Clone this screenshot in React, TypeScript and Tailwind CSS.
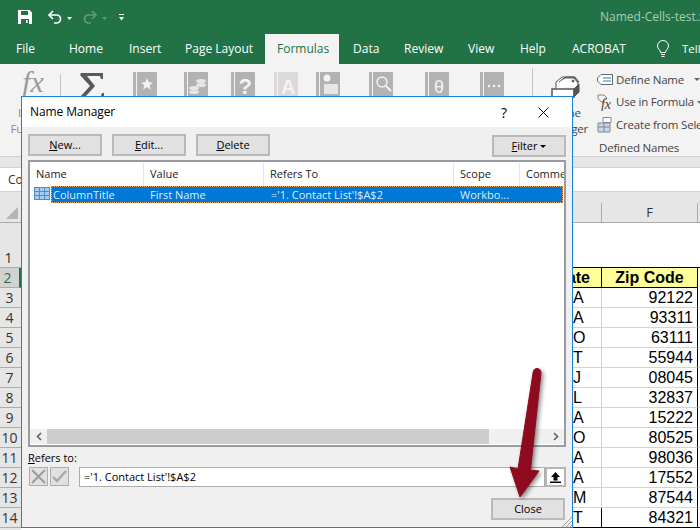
import React from 'react';

const tabs = [
  { label: 'File', w: 'w-[69px]', pl: 'pl-[16px]' },
  { label: 'Home', w: 'w-[60px]', pl: '' },
  { label: 'Insert', w: 'w-[56px]', pl: '' },
  { label: 'Page Layout', w: 'w-[80px]', pl: '' },
];

const tabsAfter = [
  { label: 'Data', w: 'w-[65px]', pl: 'pl-[14px]' },
  { label: 'Review', w: 'w-[64px]', pl: '' },
  { label: 'View', w: 'w-[52px]', pl: '' },
  { label: 'Help', w: 'w-[52px]', pl: '' },
  { label: 'ACROBAT', w: 'w-[82px]', pl: '' },
];

const states = ['CA', 'CA', 'MO', 'MT', 'NJ', 'FL', 'PA', 'CO', 'CA', 'PA', 'NM', 'UT'];
const zips = ['92122', '93311', '63111', '55944', '08045', '32837', '15222', '80525', '98036', '17552', '87544', '84321'];

const Book: React.FC<{ className: string; light?: boolean; children?: React.ReactNode }> = ({ className, light, children }) => (
  <svg width="24" height="40" viewBox="0 0 24 40" className={`flex-shrink-0 ${className}`}>
    <rect x="0" y="0" width="3" height="40" fill={light ? '#dcd8dc' : '#b2b2b2'} />
    <rect x="4" y="0" width="20" height="40" fill={light ? '#dcd8dc' : '#b2b2b2'} />
    {children}
  </svg>
);

const DialogButton: React.FC<{ className?: string; children: React.ReactNode }> = ({ className = '', children }) => (
  <button className={`w-[74px] h-[22px] flex items-center justify-center bg-[#e1e1e1] border-2 border-[#b9b9b9] text-[11px] text-black ${className}`}>
    {children}
  </button>
);

export default function App() {
  return (
    <div className="relative w-[700px] h-[530px] overflow-hidden bg-white flex flex-col font-['Open_Sans',sans-serif]">
      {/* title bar */}
      <div className="h-[34px] bg-[#217346] flex items-center flex-shrink-0">
        <svg width="16" height="16" viewBox="0 0 16 16" className="ml-[17px]">
          <path d="M1 1h11.5L15 3.5V15H1z M4 2v4h7V2z M4 10v5h8v-5z" fill="#fff" fillRule="evenodd" />
          <rect x="9" y="11" width="1.6" height="3" fill="#fff" />
        </svg>
        <svg width="16" height="14" viewBox="0 0 16 14" className="ml-[14px]" fill="none" stroke="#fff" strokeWidth="1.7">
          <path d="M6 1 2 5l4 4" />
          <path d="M2 5h7.5a4 4 0 0 1 0 8H7" />
        </svg>
        <svg width="5" height="3" viewBox="0 0 5 3" className="ml-[4px] mt-[2px]"><path d="M0 0h5L2.5 3z" fill="#fff" /></svg>
        <svg width="16" height="14" viewBox="0 0 16 14" className="ml-[10px]" fill="none" stroke="#5f9a7b" strokeWidth="1.7">
          <path d="m10 1 4 4-4 4" />
          <path d="M14 5H6.5a4 4 0 0 0 0 8H9" />
        </svg>
        <svg width="5" height="3" viewBox="0 0 5 3" className="ml-[4px] mt-[2px]"><path d="M0 0h5L2.5 3z" fill="#5f9a7b" /></svg>
        <svg width="5" height="7" viewBox="0 0 5 7" className="ml-[12px]"><path d="M0 0h5v1H0zM0 3h5L2.5 6.5z" fill="#fff" /></svg>
        <span className="ml-auto w-[100px] text-[12px] whitespace-nowrap overflow-hidden text-[#a9cbb8]">Named-Cells-test.xlsx</span>
      </div>

      {/* tabs */}
      <div className="h-[30px] bg-[#217346] flex flex-shrink-0 text-[12px] text-white overflow-hidden">
        {tabs.map((t) => (
          <div key={t.label} className={`${t.w} ${t.pl} flex items-center flex-shrink-0`}>{t.label}</div>
        ))}
        <div className="w-[74px] bg-[#f3f3f3] text-[#217346] flex items-center pl-[12px] flex-shrink-0">Formulas</div>
        {tabsAfter.map((t) => (
          <div key={t.label} className={`${t.w} ${t.pl} flex items-center flex-shrink-0`}>{t.label}</div>
        ))}
        <svg width="14" height="18" viewBox="0 0 14 18" fill="none" stroke="#fff" strokeWidth="1" className="ml-[2px] mt-[6px] flex-shrink-0">
          <path d="M4.5 12.5C4.5 10 1.5 9 1.5 6a5.5 5.5 0 0 1 11 0c0 3-3 4-3 6.5z" />
          <path d="M5 14.5h4M5.5 16.5h3" />
        </svg>
        <div className="ml-[12px] flex items-center flex-shrink-0 text-[11.5px]">Tell me</div>
      </div>

      {/* ribbon */}
      <div className="h-[93px] bg-[#f3f3f3] flex flex-shrink-0 border-b border-[#d0d0d0] text-[11.5px] tracking-[-0.2px] text-[#444]">
        <div className="w-[60px] flex-shrink-0 flex flex-col items-center text-[#8a8a8a]">
          <span className="mt-[3px] ml-[6px] h-[30px] font-['Liberation_Serif',serif] italic text-[30px] leading-[30px] text-[#9a9a9a]">fx</span>
          <span className="mt-[8px] ml-[6px] leading-[16px]">Insert</span>
          <span className="ml-[6px] leading-[16px]">Function</span>
        </div>
        <div className="w-px h-[22px] mt-[10px] bg-[#c6c6c6] flex-shrink-0" />
        <svg width="24" height="26" viewBox="0 0 24 26" className="ml-[19px] mt-[9px] flex-shrink-0">
          <path d="M1 0h22v6h-2l-1-3H7l8 10-9 10h15l1-3h2v6H0v-2l10-11L0 2z" fill="#595959" />
        </svg>
        <Book className="ml-[29px] mt-[8px]">
          <path d="m14 6 1.8 4.3 4.2.3-3.300 2.800 1.100 4.300L14 15l-3.800 2.500 1.100-4.300L8 10.600l4.200-.3z" fill="#f3f3f3" />
        </Book>
        <Book className="ml-[27px] mt-[8px]">
          <ellipse cx="17" cy="9" rx="5" ry="2" fill="#e6e6e6" />
          <ellipse cx="17" cy="13" rx="5" ry="2" fill="#e6e6e6" />
          <ellipse cx="10" cy="16" rx="5" ry="2" fill="#e6e6e6" />
          <ellipse cx="10" cy="20" rx="5" ry="2" fill="#e6e6e6" />
        </Book>
        <Book className="ml-[23px] mt-[8px]">
          <text x="14" y="22" textAnchor="middle" fontSize="22" fontWeight="700" fill="#f3f3f3" fontFamily="'Liberation Sans', sans-serif">?</text>
        </Book>
        <Book className="ml-[19px] mt-[8px]" light>
          <text x="14" y="22" textAnchor="middle" fontSize="20" fontWeight="700" fill="#f3f3f3" fontFamily="'Liberation Sans', sans-serif">A</text>
        </Book>
        <Book className="ml-[18px] mt-[8px]">
          <circle cx="11" cy="6" r="3.5" fill="#f3f3f3" />
          <path d="M8 12h14v10H8z" fill="#e6e6e6" />
        </Book>
        <Book className="ml-[29px] mt-[8px]">
          <circle cx="13" cy="10" r="5" fill="none" stroke="#f3f3f3" strokeWidth="1.5" />
          <path d="m17 14 5 5" stroke="#f3f3f3" strokeWidth="2" />
        </Book>
        <Book className="ml-[32px] mt-[8px]">
          <text x="14" y="21" textAnchor="middle" fontSize="18" fill="#f3f3f3" fontFamily="'Liberation Sans', sans-serif">θ</text>
        </Book>
        <Book className="ml-[31px] mt-[8px]">
          <circle cx="9" cy="14" r="1.3" fill="#f3f3f3" />
          <circle cx="14" cy="14" r="1.3" fill="#f3f3f3" />
          <circle cx="19" cy="14" r="1.3" fill="#f3f3f3" />
        </Book>
        <div className="w-px h-[82px] mt-[4px] ml-[28px] bg-[#c6c6c6] flex-shrink-0" />
        <div className="w-[64px] flex-shrink-0 flex flex-col items-center">
          <svg width="30" height="24" viewBox="0 0 30 24" className="mt-[10px] h-[24px]" fill="none" stroke="#555" strokeWidth="1">
            <path d="M6 15V8l6-5h12l4 5v3" fill="#fff" />
            <path d="M9 8l5-4h10l4 5" />
            <path d="M12 6l4-3h9l4 5" />
            <circle cx="23" cy="7" r="1" fill="#555" />
            <path d="M2 15h22v8H2z" fill="#fff" strokeWidth="1.5" />
            <path d="M24 15l5-5v8l-5 5z" fill="#555" />
          </svg>
          <span className="mt-[7px] leading-[16px]">Name</span>
          <span className="leading-[16px]">Manager</span>
        </div>
        <div className="flex flex-col flex-shrink-0 whitespace-nowrap">
          <div className="h-[23px] mt-[4px] flex items-center">
            <svg width="16" height="11" viewBox="0 0 16 11" fill="none" className="flex-shrink-0">
              <path d="M4 .5h11.5v10H4L.5 7V4z" stroke="#666" fill="#fff" />
              <path d="M6 4h8M6 7h8" stroke="#2b79c2" />
            </svg>
            <span className="ml-[3px]">Define Name</span>
            <svg width="6" height="3" viewBox="0 0 6 3" className="ml-[10px]"><path d="M0 0h6L3 3z" fill="#666" /></svg>
          </div>
          <div className="h-[23px] flex items-center">
            <svg width="16" height="17" viewBox="0 0 16 17" className="flex-shrink-0" fill="none">
              <path d="M1 1h6l3 3-5 4-4-3z" stroke="#888" />
              <text x="4" y="15" fontSize="14" fontStyle="italic" fill="#444" fontFamily="'Liberation Serif', serif">fx</text>
            </svg>
            <span className="ml-[3px]">Use in Formula</span>
            <svg width="6" height="3" viewBox="0 0 6 3" className="ml-[3px]"><path d="M0 0h6L3 3z" fill="#666" /></svg>
          </div>
          <div className="h-[23px] flex items-center">
            <svg width="16" height="16" viewBox="0 0 16 16" className="flex-shrink-0" fill="none">
              <path d="M6 .5h8v5H6z" stroke="#888" fill="#fff" />
              <path d="M1 6h12v9H1z" fill="#c5d7ec" stroke="#888" />
              <path d="M1 10h12M7 6v9" stroke="#888" />
            </svg>
            <span className="ml-[3px]">Create from Selection</span>
          </div>
          <span className="mt-[4px] ml-[2px] leading-[16px]">Defined Names</span>
        </div>
      </div>

      {/* gap above the formula bar */}
      <div className="h-[10px] bg-[#e6e6e6] flex-shrink-0" />

      {/* formula bar */}
      <div className="h-[25px] bg-white border-y border-[#d4d4d4] flex items-center flex-shrink-0 text-[12px] text-[#333] pl-[8px]">Co</div>

      <div className="h-[11px] bg-[#e6e6e6] flex-shrink-0" />

      {/* column headers */}
      <div className="h-[20px] bg-[#e6e6e6] border-b border-[#ababab] flex flex-shrink-0">
        <div className="w-[21px] relative flex-shrink-0">
          <svg width="12" height="12" viewBox="0 0 12 12" className="absolute right-[3px] bottom-[3px]"><path d="M12 0v12H0z" fill="#b4b4b4" /></svg>
        </div>
        <div className="flex-1 border-r border-[#ababab]" />
        <div className="w-[96px] border-r border-[#ababab] flex items-center justify-center text-[13px] text-[#333]">F</div>
        <div className="w-[2px]" />
      </div>

      {/* sheet */}
      <div className="flex flex-1 font-['Liberation_Sans',sans-serif] text-[16px] text-black min-h-0">
        <div className="w-[21px] bg-[#e6e6e6] flex-shrink-0 text-[14px] leading-[19px] font-['Open_Sans',sans-serif] text-[#333]">
          <div className="h-[45px] flex items-end justify-center border-b border-[#ababab] pr-[4px]">1</div>
          <div className="h-[20px] bg-[#d2d2d2] border-b border-r-2 border-[#ababab] border-r-[#217346] flex items-center justify-center pr-[4px] text-[#217346]">2</div>
          {Array.from({ length: 13 }, (_, i) => (
            <div key={i} className="h-[20px] border-b border-[#ababab] flex items-center justify-center pr-[2px]">{i + 3}</div>
          ))}
        </div>
        <div className="flex-1 min-w-0 flex flex-col">
          <div className="h-[45px] flex-shrink-0 border-b border-black" />
          <div className="h-[20px] flex-shrink-0 flex font-bold">
            <div className="flex-1 bg-[#ffff99] border-b border-black border-r text-right pr-[11px] whitespace-nowrap leading-[19px]">State</div>
            <div className="w-[96px] bg-[#ffff99] border-b border-r border-black text-center leading-[19px]">Zip Code</div>
            <div className="w-[2px]" />
          </div>
          {zips.map((zip, i) => (
            <div key={zip} className={`h-[20px] flex-shrink-0 flex ${i === 11 ? 'border-b border-black' : ''}`}>
              <div className={`flex-1 border-r border-[#d4d4d4] pl-[539px] whitespace-nowrap leading-[19px] ${i === 11 ? 'border-r-black' : 'border-b border-b-[#d4d4d4]'}`}>
                <span className="inline-block w-[13px]">{states[i][0]}</span>{states[i][1]}
              </div>
              <div className={`w-[96px] border-r border-black pr-[4px] text-right leading-[19px] ${i === 11 ? '' : 'border-b border-b-[#d4d4d4]'}`}>{zip}</div>
              <div className={`w-[2px] ${i === 11 ? '' : 'border-b border-b-[#d4d4d4]'}`} />
            </div>
          ))}
        </div>
      </div>

      {/* name manager dialog */}
      <div className="absolute left-[21px] top-[96px] w-[552px] h-[432px] border border-[#1883d7] bg-[#f0f0f0] flex flex-col text-[11px] text-black">
        <div className="h-[30px] bg-white flex items-center flex-shrink-0 pl-[8px]">
          <span className="text-[12px] tracking-[-0.1px]">Name Manager</span>
          <span className="ml-auto text-[14px] mr-[31px]">?</span>
          <svg width="11" height="11" viewBox="0 0 11 11" className="mr-[23px]" stroke="#000" strokeWidth="1"><path d="m.5.5 10 10M10.5.5l-10 10" /></svg>
        </div>
        <div className="flex h-[22px] mt-[7px] ml-[6px] flex-shrink-0">
          <DialogButton><span><u>N</u>ew...</span></DialogButton>
          <DialogButton className="ml-[10px]"><span><u>E</u>dit...</span></DialogButton>
          <DialogButton className="ml-[10px]"><span><u>D</u>elete</span></DialogButton>
          <DialogButton className="ml-[222px] mt-[1px] h-[21px]">
            <span><u>F</u>ilter</span>
            <svg width="6" height="3" viewBox="0 0 6 3" className="ml-[3px]"><path d="M0 0h6L3 3z" fill="#000" /></svg>
          </DialogButton>
        </div>

        {/* names list */}
        <div className="w-[538px] h-[287px] mt-[4px] ml-[6px] flex-shrink-0 bg-white border-2 border-[#9a9aa2] flex flex-col">
          <div className="h-[24px] flex flex-shrink-0 text-[#222] pt-[1px]">
            <div className="w-[114px] pl-[6px] border-r border-[#e5e5e5] flex items-center">Name</div>
            <div className="w-[120px] pl-[6px] border-r border-[#e5e5e5] flex items-center">Value</div>
            <div className="w-[190px] pl-[6px] border-r border-[#e5e5e5] flex items-center">Refers To</div>
            <div className="w-[66px] pl-[6px] border-r border-[#e5e5e5] flex items-center">Scope</div>
            <div className="flex-1 pl-[6px] flex items-center overflow-hidden whitespace-nowrap">Comme</div>
          </div>
          <div className="h-[17px] flex flex-shrink-0">
            <svg width="16" height="13" viewBox="0 0 16 13" className="ml-[4px] mr-[1px] mt-[1px] flex-shrink-0">
              <rect width="16" height="13" fill="#4d8cc8" />
              <path d="M1 1h4v3H1zM6 1h4v3H6zM11 1h4v3h-4zM1 5h4v3H1zM6 5h4v3H6zM11 5h4v3h-4zM1 9h4v3H1zM6 9h4v3H6zM11 9h4v3h-4z" fill="#a5cbed" />
            </svg>
            <div className="flex-1 mr-[1px] pt-[1px] bg-[#0078d7] border border-dotted border-[#f0a860] flex items-center text-[#dcedfb] whitespace-nowrap">
              <span className="w-[98px] pl-[1px]">ColumnTitle</span>
              <span className="w-[121px]">First Name</span>
              <span className="w-[189px]">='1. Contact List'!$A$2</span>
              <span>Workbo...</span>
            </div>
          </div>
          <div className="flex-1" />
          <div className="h-[15px] flex flex-shrink-0 items-center bg-[#f0f0f0]">
            <div className="w-[17px] flex items-center justify-center">
              <svg width="6" height="9" viewBox="0 0 6 9" fill="none" stroke="#606060" strokeWidth="1.6"><path d="M5 1 1.5 4.5 5 8" /></svg>
            </div>
            <div className="w-[442px] h-full bg-[#cdcdcd]" />
            <div className="flex-1" />
            <div className="w-[17px] flex items-center justify-center">
              <svg width="6" height="9" viewBox="0 0 6 9" fill="none" stroke="#606060" strokeWidth="1.6"><path d="m1 1 3.5 3.5L1 8" /></svg>
            </div>
          </div>
          <div className="h-[1px] flex-shrink-0" />
        </div>

        <div className="mt-[2px] ml-[6px] h-[17px] leading-[17px] flex-shrink-0"><u>R</u>efers to:</div>
        <div className="flex mt-[1px] ml-[7px] h-[20px] flex-shrink-0">
          <div className="w-[19px] h-[19px] bg-[#e1e1e1] border border-[#adadad] flex items-center justify-center">
            <svg width="15" height="15" viewBox="0 0 15 15" stroke="#9c9c9c" strokeWidth="2"><path d="m1 1 13 13M14 1 1 14" /></svg>
          </div>
          <div className="w-[19px] h-[19px] ml-[2px] bg-[#e1e1e1] border border-[#adadad] flex items-center justify-center">
            <svg width="15" height="13" viewBox="0 0 15 13" stroke="#a8a8a8" strokeWidth="2.4" fill="none"><path d="m1 7 4 4 9-10" /></svg>
          </div>
          <div className="w-[466px] h-[20px] ml-[10px] bg-white border border-[#adadad] flex items-center pl-[4px]">='1. Contact List'!$A$2</div>
          <div className="w-[21px] h-[20px] bg-white border-2 border-[#b5b5b5] flex items-center justify-center">
            <svg width="11" height="11" viewBox="0 0 11 11"><path d="M5.5 0 10 5H7.5v3.5h-4V5H1zM0 9.500h11V11H0z" fill="#000" /></svg>
          </div>
        </div>
        <div className="flex justify-end mt-[11px] mr-[7px] flex-shrink-0">
          <DialogButton className="h-[21px]">Close</DialogButton>
        </div>
        <svg width="10" height="10" viewBox="0 0 10 10" className="absolute right-0 bottom-0" stroke="#a0a0a0" strokeWidth="1">
          <path d="M0 10 10 0M4 10l6-6M8 10l2-2" />
        </svg>
      </div>

      {/* red arrow pointing at Close */}
      <svg width="50" height="135" viewBox="0 0 50 135" className="absolute left-[500px] top-[365px] drop-shadow-[2px_2px_2px_rgba(0,0,0,0.45)]">
        <path d="M33 8 C33 2 41 2 41 8 L30.5 105 L39 106 L20 132 L10 102 L18 104 Z" fill="#8e0b1f" stroke="#8e0b1f" strokeLinejoin="round" />
      </svg>
    </div>
  );
}
